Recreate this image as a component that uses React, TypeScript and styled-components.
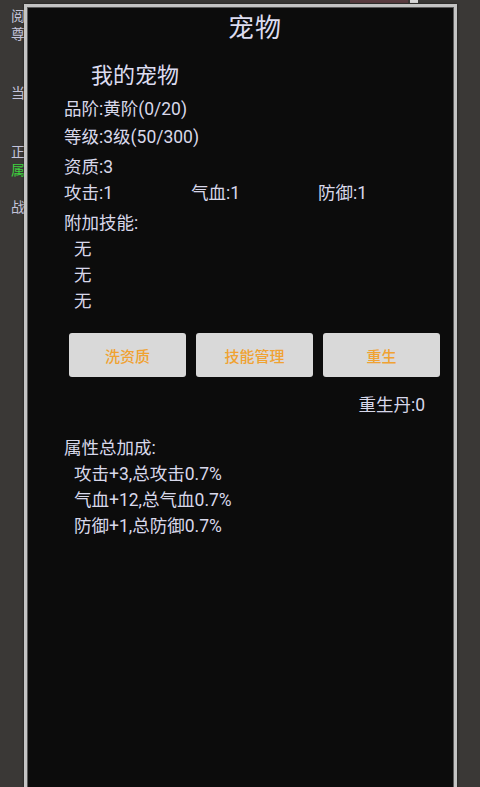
import styled, { createGlobalStyle } from 'styled-components'

const GlobalStyle = createGlobalStyle`
  html, body {
    margin: 0;
    padding: 0;
    background-color: #3a3836;
    overflow: hidden;
  }
  body {
    font-family: Roboto, "Noto Sans CJK SC", sans-serif;
  }
`

const Page = styled.div`
  position: relative;
  width: 480px;
  height: 787px;
  background-color: #3a3836;
  overflow: hidden;
`

const SideColumn = styled.div`
  display: flex;
  flex-direction: column;
  padding-left: 11px;
  font-size: 14px;
  line-height: 18px;
  color: #c4c4da;
`

const SideText = styled.div<{ $gap: number; $green?: boolean }>`
  margin-top: ${(p) => p.$gap}px;
  white-space: nowrap;
  color: ${(p) => (p.$green ? '#3ed23e' : '#c4c4da')};
`

const TopPeek = styled.div`
  position: absolute;
  top: 0;
  left: 350px;
  display: flex;
  gap: 2px;
  height: 3px;
`

const PeekBar = styled.div<{ $color: string; $w: number }>`
  width: ${(p) => p.$w}px;
  height: 3px;
  background-color: ${(p) => p.$color};
`

const Modal = styled.div`
  position: absolute;
  top: 4px;
  left: 24px;
  width: 433px;
  height: 820px;
  background-color: #0c0c0c;
  border: 3px solid #c4c4c4;
  box-shadow: inset 0 0 0 1px #5a5a5a, 0 0 2px rgba(0, 0, 0, 0.6);
  color: #d8d8ea;
  display: flex;
  flex-direction: column;
  padding: 1px 0 0 37px;
  box-sizing: border-box;
`

const Title = styled.div`
  font-size: 26px;
  line-height: 40px;
  text-align: center;
  margin-left: -4px;
  width: 100%;
  color: #dcdcf0;
  letter-spacing: 1px;
`

const SubTitle = styled.div`
  font-size: 22px;
  line-height: 30px;
  margin-top: 13px;
  margin-left: 27px;
  color: #dcdcf0;
`

const Line = styled.div<{ $gap?: number; $indent?: number }>`
  font-size: 17.5px;
  line-height: 26px;
  margin-top: ${(p) => p.$gap ?? 0}px;
  padding-left: ${(p) => p.$indent ?? 0}px;
  white-space: nowrap;
`

const StatsRow = styled.div`
  display: grid;
  grid-template-columns: 127px 127px 127px;
  font-size: 17.5px;
  line-height: 26px;
`

const ButtonRow = styled.div`
  display: flex;
  gap: 10px;
  margin-top: 19px;
  margin-left: 5px;
`

const ActionButton = styled.button`
  width: 117px;
  height: 44px;
  border: none;
  border-radius: 3px;
  background-color: #d9d9d9;
  color: #f0a232;
  font-family: Roboto, "Noto Sans CJK SC", sans-serif;
  font-size: 15px;
  font-weight: 500;
  cursor: pointer;
  padding: 0;
`

const RightLine = styled.div`
  font-size: 17.5px;
  line-height: 26px;
  margin-top: 15px;
  text-align: right;
  padding-right: 29px;
`

const stats = ['攻击:1', '气血:1', '防御:1']
const skills = ['无', '无', '无']
const bonuses = ['攻击+3,总攻击0.7%', '气血+12,总气血0.7%', '防御+1,总防御0.7%']

export default function App() {
  return (
    <>
      <GlobalStyle />
      <Page>
        <SideColumn>
          <SideText $gap={7}>阅历</SideText>
          <SideText $gap={0}>尊号</SideText>
          <SideText $gap={41}>当前</SideText>
          <SideText $gap={41}>正常</SideText>
          <SideText $gap={0} $green>属性</SideText>
          <SideText $gap={19}>战力</SideText>
        </SideColumn>
        <TopPeek>
          <PeekBar $color="#5a3c40" $w={58} />
          <PeekBar $color="#d8d8d8" $w={8} />
        </TopPeek>

        <Modal>
          <Title>宠物</Title>
          <SubTitle>我的宠物</SubTitle>
          <Line $gap={5}>品阶:黄阶(0/20)</Line>
          <Line $gap={2}>等级:3级(50/300)</Line>
          <Line $gap={4}>资质:3</Line>
          <StatsRow>
            {stats.map((s) => (
              <span key={s}>{s}</span>
            ))}
          </StatsRow>
          <Line $gap={4}>附加技能:</Line>
          {skills.map((s, i) => (
            <Line key={i} $indent={10}>
              {s}
            </Line>
          ))}
          <ButtonRow>
            <ActionButton>洗资质</ActionButton>
            <ActionButton>技能管理</ActionButton>
            <ActionButton>重生</ActionButton>
          </ButtonRow>
          <RightLine>重生丹:0</RightLine>
          <Line $gap={17}>属性总加成:</Line>
          {bonuses.map((b) => (
            <Line key={b} $indent={10}>
              {b}
            </Line>
          ))}
        </Modal>
      </Page>
    </>
  )
}
